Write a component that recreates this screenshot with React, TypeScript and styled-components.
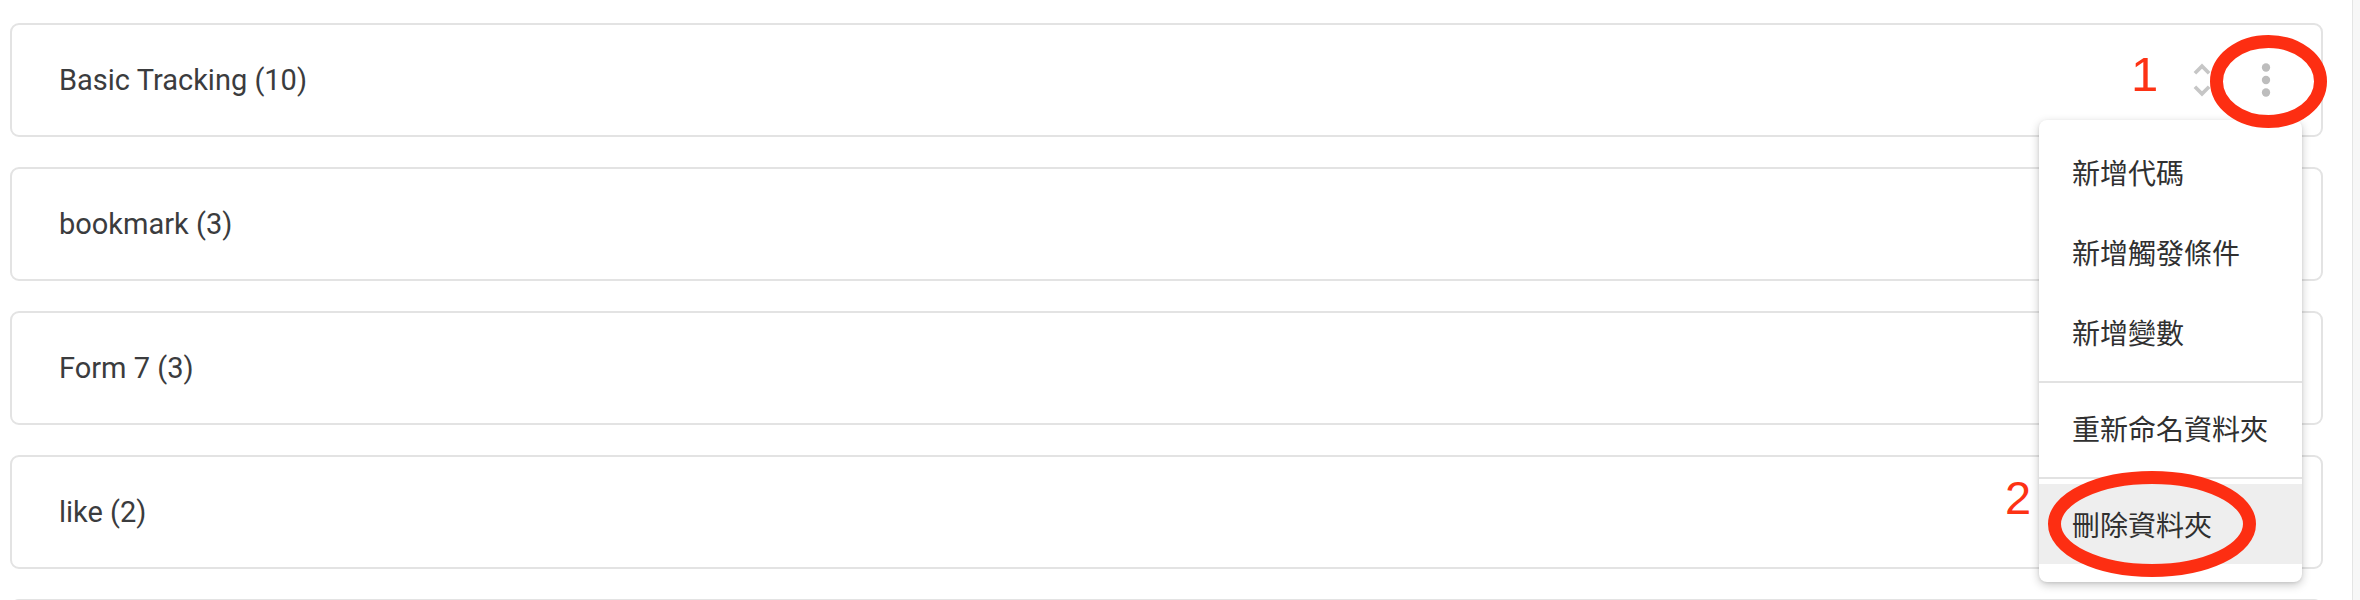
import React from 'react';
import styled, { createGlobalStyle } from 'styled-components';

const GlobalStyle = createGlobalStyle`
  html, body {
    margin: 0;
    padding: 0;
    background: #ffffff;
  }
  body {
    font-family: Roboto, "Noto Sans", "Noto Sans CJK TC", sans-serif;
  }
`;

const Page = styled.div`
  position: relative;
  display: flex;
  width: 2360px;
  height: 600px;
  overflow: hidden;
  background: #ffffff;
`;

const FolderList = styled.div`
  flex: 1;
  display: flex;
  flex-direction: column;
  gap: 30px;
  padding: 23px 29px 0 10px;
`;

const ScrollTrack = styled.div`
  width: 7px;
  border-left: 1px solid #e4e4e4;
  background: #f7f7f7;
`;

const FolderCard = styled.div<{ $raised?: boolean }>`
  position: relative;
  flex-shrink: 0;
  box-sizing: border-box;
  height: 114px;
  display: flex;
  align-items: center;
  padding: 0 30px 0 47px;
  border: 2px solid #e3e3e3;
  border-radius: 9px;
  background: #ffffff;
  z-index: ${p => (p.$raised ? 2 : 1)};
`;

const FolderTitle = styled.div`
  flex: 1;
  font-family: Roboto, "Noto Sans", sans-serif;
  font-size: 29px;
  color: #3b3c3e;
`;

const Actions = styled.div`
  display: flex;
  align-items: center;
  gap: 17px;
`;

const IconButton = styled.div<{ $size: number }>`
  width: ${p => p.$size}px;
  height: ${p => p.$size}px;
  display: flex;
  align-items: center;
  justify-content: center;

  svg {
    display: block;
  }
`;

const Menu = styled.div`
  position: absolute;
  top: 95px;
  right: 19px;
  width: 263px;
  padding: 12px 0 18px;
  background: #ffffff;
  border-radius: 8px;
  box-shadow: 0 3px 10px rgba(0, 0, 0, 0.22), 0 1px 3px rgba(0, 0, 0, 0.08);
  z-index: 5;
`;

const MenuItem = styled.div<{ $active?: boolean }>`
  height: 80px;
  display: flex;
  align-items: center;
  padding-left: 33px;
  font-family: "Noto Sans CJK TC", "Noto Sans", sans-serif;
  font-size: 28px;
  color: #303030;
  background: ${p => (p.$active ? '#eeeeee' : 'transparent')};
`;

const MenuDivider = styled.div`
  height: 2px;
  margin: 9px 0 5px;
  background: #e2e2e2;
`;

const Marker = styled.span<{ $x: number; $y: number; $size: number }>`
  position: absolute;
  left: ${p => p.$x}px;
  top: ${p => p.$y}px;
  font-family: "Liberation Sans", Arial, sans-serif;
  font-size: ${p => p.$size}px;
  line-height: ${p => p.$size}px;
  color: #fd3214;
  z-index: 20;
`;

const MarkupLayer = styled.svg`
  position: absolute;
  left: 0;
  top: 0;
  pointer-events: none;
  z-index: 15;
`;

const UnfoldIcon = () => (
  <svg width="44" height="44" viewBox="0 0 24 24">
    <path
      fill="#c6c6c6"
      d="M12 5.83L15.17 9l1.41-1.41L12 3 7.41 7.59 8.83 9 12 5.83zm0 12.34L8.83 15l-1.41 1.41L12 21l4.59-4.59L15.17 15 12 18.17z"
    />
  </svg>
);

const MoreIcon = () => (
  <svg width="50" height="50" viewBox="0 0 24 24">
    <circle cx="12" cy="6" r="2" fill="#bdbdbd" />
    <circle cx="12" cy="12" r="2" fill="#bdbdbd" />
    <circle cx="12" cy="18" r="2" fill="#bdbdbd" />
  </svg>
);

const folders = [
  { name: 'Basic Tracking', count: 10 },
  { name: 'bookmark', count: 3 },
  { name: 'Form 7', count: 3 },
  { name: 'like', count: 2 },
];

const menuGroups = [
  ['新增代碼', '新增觸發條件', '新增變數'],
  ['重新命名資料夾'],
  ['刪除資料夾'],
];

const FolderMenu: React.FC = () => (
  <Menu>
    {menuGroups.map((group, gi) => (
      <React.Fragment key={gi}>
        {gi > 0 && <MenuDivider />}
        {group.map(label => (
          <MenuItem key={label} $active={label === '刪除資料夾'}>
            {label}
          </MenuItem>
        ))}
      </React.Fragment>
    ))}
  </Menu>
);

export default function App() {
  return (
    <>
      <GlobalStyle />
      <Page>
        <FolderList>
          {folders.map((f, i) => (
            <FolderCard key={f.name} $raised={i === 0}>
              <FolderTitle>
                {f.name} ({f.count})
              </FolderTitle>
              {i === 0 && (
                <>
                  <Actions>
                    <IconButton $size={44}>
                      <UnfoldIcon />
                    </IconButton>
                    <IconButton $size={50}>
                      <MoreIcon />
                    </IconButton>
                  </Actions>
                  <FolderMenu />
                </>
              )}
            </FolderCard>
          ))}
          <FolderCard />
        </FolderList>
        <ScrollTrack />

        {/* hand-drawn annotation marks over the screenshot */}
        <Marker $x={2131} $y={50} $size={49}>1</Marker>
        <Marker $x={2005} $y={474} $size={47}>2</Marker>
        <MarkupLayer width="2360" height="600" viewBox="0 0 2360 600">
          <ellipse cx="2268.5" cy="81.5" rx="52" ry="40" fill="none" stroke="#fd2e12" strokeWidth="13" />
          <ellipse cx="2152" cy="524" rx="97.5" ry="46.5" fill="none" stroke="#fd2e12" strokeWidth="13" />
        </MarkupLayer>
      </Page>
    </>
  );
}
